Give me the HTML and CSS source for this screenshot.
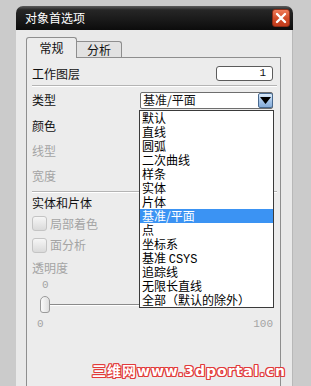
FILE: index.html
```html
<!DOCTYPE html>
<html>
<head>
    <meta charset="utf-8">
    <link rel="stylesheet" href="styles.css">
</head>
<body>
    <div class="dialog">
        <div class="title-bar">
            <span class="title">对象首选项</span>
            <span class="close-btn">
                <svg width="12" height="12" viewBox="0 0 12 12">
                    <path d="M2 2 L10 10 M10 2 L2 10" stroke="#fff" stroke-width="2.4" stroke-linecap="round"/>
                </svg>
            </span>
        </div>
        <div class="dialog-body">
            <div class="tabs">
                <div class="tab active">常规</div>
                <div class="tab">分析</div>
            </div>
            <div class="panel">
                <div class="row layer-row">
                    <span class="label">工作图层</span>
                    <div class="layer-input">1</div>
                </div>
                <div class="separator"></div>

                <div class="row type-row">
                    <span class="label">类型</span>
                    <div class="combo">
                        <span class="combo-text">基准/平面</span>
                        <span class="combo-btn">
                            <svg width="11" height="7" viewBox="0 0 11 7"><path d="M0 0 L11 0 L5.5 7 Z" fill="#000"/></svg>
                        </span>
                        <!-- open dropdown list -->
                        <div class="dropdown-list">
                            <div class="item">默认</div>
                            <div class="item">直线</div>
                            <div class="item">圆弧</div>
                            <div class="item">二次曲线</div>
                            <div class="item">样条</div>
                            <div class="item">实体</div>
                            <div class="item">片体</div>
                            <div class="item selected">基准/平面</div>
                            <div class="item">点</div>
                            <div class="item">坐标系</div>
                            <div class="item">基准 <span class="latin">CSYS</span></div>
                            <div class="item">追踪线</div>
                            <div class="item">无限长直线</div>
                            <div class="item">全部（默认的除外）</div>
                        </div>
                    </div>
                </div>
                <div class="row"><span class="label">颜色</span></div>
                <div class="row"><span class="label disabled">线型</span></div>
                <div class="row"><span class="label disabled">宽度</span></div>
                <div class="separator sep-second"></div>

                <div class="row group-row"><span class="label">实体和片体</span></div>
                <div class="row check-row">
                    <span class="checkbox"></span>
                    <span class="label disabled">局部着色</span>
                </div>
                <div class="row check-row second-check">
                    <span class="checkbox"></span>
                    <span class="label disabled">面分析</span>
                </div>
                <div class="row opacity-row"><span class="label disabled">透明度</span></div>

                <div class="slider-value">0</div>
                <div class="slider">
                    <span class="slider-thumb"></span>
                    <span class="slider-track"></span>
                </div>
                <div class="slider-range">
                    <span>0</span>
                    <span>100</span>
                </div>
            </div>
        </div>
    </div>

    <svg class="cursor" width="13" height="21" viewBox="0 0 13 21">
        <path d="M1 1 L1 16 L4.5 12.5 L7 18.5 L9.2 17.6 L6.8 11.8 L11.5 11.8 Z" fill="#fff" stroke="#333" stroke-width="1" stroke-linejoin="round"/>
    </svg>

    <div class="watermark">三维网www.3dportal.cn</div>
</body>
</html>
```

FILE: styles.css
```css
body {
    margin: 0;
    height: 386px;
    overflow: hidden;
    background-color: #cbcbcb;
    font-family: "Noto Sans CJK SC", sans-serif;
    font-size: 12px;
    color: #111;
}

.dialog {
    width: 277px;
    margin: 6px 0 0 16px;
}

.title-bar {
    height: 24px;
    display: flex;
    align-items: center;
    justify-content: space-between;
    padding: 0 3px 0 9px;
    border-radius: 7px 7px 0 0;
    background: linear-gradient(#5c5c5c 0, #262626 4px, #0c0c0c 100%);
}

.title {
    color: #fff;
    font-size: 12px;
    line-height: 14px;
}

.close-btn {
    width: 16px;
    height: 16px;
    display: flex;
    align-items: center;
    justify-content: center;
    border: 1px solid #8c2c16;
    border-radius: 3px;
    background: linear-gradient(#ef7b58, #d04a26 55%, #c23c1c);
}

.dialog-body {
    height: 370px;
    padding: 7px 0 0 10px;
    background-color: #e9e9e9;
    border-right: 1px solid #b8b8b8;
    box-sizing: border-box;
}

.tabs {
    display: flex;
    align-items: flex-end;
    height: 20px;
}

.tab {
    height: 15px;
    width: 44px;
    text-align: center;
    line-height: 15px;
    border: 1px solid #8e8e8e;
    border-bottom: none;
    border-left: none;
    border-radius: 0 3px 0 0;
    background-color: #e2e2e2;
}

.tab.active {
    position: relative;
    z-index: 1;
    width: 49px;
    height: 20px;
    line-height: 20px;
    margin-bottom: -1px;
    border-left: 1px solid #8e8e8e;
    border-radius: 3px 3px 0 0;
    background-color: #ececec;
}

.panel {
    width: 255px;
    height: 330px;
    padding: 4px 7px 0 5px;
    box-sizing: border-box;
    border: 1px solid #8e8e8e;
    background-color: #ececec;
}

.row {
    display: flex;
    align-items: center;
    height: 25px;
}

.label {
    line-height: 14px;
}

.label.disabled {
    color: #a4a4a4;
}

.layer-row {
    height: 23px;
    justify-content: space-between;
}

.layer-input {
    width: 49px;
    height: 13px;
    padding-right: 6px;
    text-align: right;
    font-family: "Liberation Mono", monospace;
    font-size: 11px;
    line-height: 13px;
    border: 1px solid #5c5c5c;
    border-radius: 3px;
    background-color: #fff;
}

.separator {
    height: 1px;
    margin-right: -4px;
    border-top: 1px solid #b4b4b4;
    background-color: #fff;
}

.sep-second {
    margin-top: 3px;
}

.type-row {
    height: 26px;
    justify-content: space-between;
}

.combo {
    position: relative;
    width: 131px;
    height: 15px;
    display: flex;
    align-items: center;
    justify-content: space-between;
    border: 1px solid #6e6e6e;
    border-radius: 2px;
    background-color: #fff;
}

.combo-text {
    padding-left: 2px;
    line-height: 14px;
}

.combo-btn {
    width: 15px;
    height: 15px;
    display: flex;
    align-items: center;
    justify-content: center;
    margin-right: -1px;
    border: 1px solid #48698f;
    border-radius: 2px;
    box-sizing: border-box;
    background: linear-gradient(#dcebfa, #9fc0e6 60%, #86acd8);
}

.dropdown-list {
    position: absolute;
    z-index: 5;
    top: 17px;
    left: -2px;
    width: 133px;
    border: 1px solid #3a3a3a;
    background-color: #fff;
}

.dropdown-list .item {
    height: 14px;
    line-height: 14px;
    padding-left: 2px;
    color: #000;
    white-space: nowrap;
}

.dropdown-list .item.selected {
    background-color: #3b93f3;
    color: #fff;
}

.latin {
    font-family: "Liberation Mono", monospace;
    font-size: 12px;
}

.group-row {
    height: 20px;
}

.check-row {
    height: 21px;
    gap: 3px;
}

.second-check {
    height: 22px;
}

.checkbox {
    width: 13px;
    height: 13px;
    border: 1px solid #c4c4c4;
    border-radius: 3px;
    background: linear-gradient(#f6f6f6, #dadada);
}

.opacity-row {
    height: 24px;
}

.slider-value {
    height: 10px;
    padding-left: 10px;
    font-family: "Liberation Mono", monospace;
    font-size: 11px;
    line-height: 10px;
    color: #a4a4a4;
}

.slider {
    display: flex;
    align-items: center;
    height: 29px;
    padding-left: 8px;
}

.slider-thumb {
    width: 8px;
    height: 15px;
    border: 1px solid #9a9a9a;
    border-radius: 5px 5px 3px 3px;
    background: linear-gradient(90deg, #fafafa, #dedede);
}

.slider-track {
    width: 220px;
    height: 1px;
    border-bottom: 1px solid #fff;
    background-color: #8a8a8a;
}

.slider-range {
    display: flex;
    justify-content: space-between;
    height: 10px;
    padding-left: 5px;
    font-family: "Liberation Mono", monospace;
    font-size: 11px;
    line-height: 10px;
    color: #a4a4a4;
}

.cursor {
    position: absolute;
    left: 223px;
    top: 211px;
}

.watermark {
    position: absolute;
    left: 92px;
    top: 362px;
    font-family: "DejaVu Sans", "Noto Sans CJK SC", sans-serif;
    font-weight: bold;
    font-size: 14px;
    letter-spacing: 1px;
    line-height: 18px;
    color: #fff;
    text-shadow: 1px 0 #e23a3a, -1px 0 #e23a3a, 0 1px #e23a3a, 0 -1px #e23a3a,
        1px 1px #e23a3a, -1px -1px #e23a3a, 1px -1px #e23a3a, -1px 1px #e23a3a;
}
```
